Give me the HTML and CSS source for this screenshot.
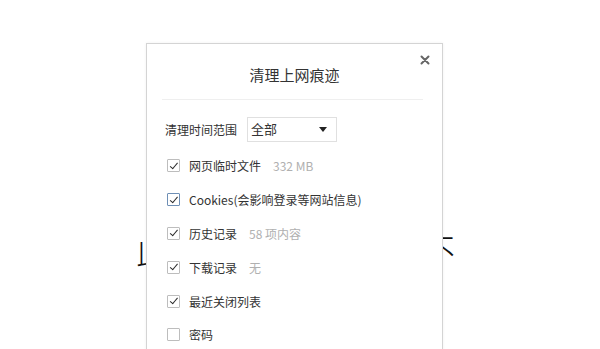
FILE: index.html
```html
<!DOCTYPE html>
<html lang="zh-CN">
<head>
<meta charset="utf-8">
<link rel="stylesheet" href="styles.css">
</head>
<body>
<div class="page">
  <div class="bg-line"><span class="bg-char left">此</span><span class="bg-char right">不</span></div>
</div>
<div class="dialog">
  <button class="close" aria-label="关闭">
    <svg width="10" height="10" viewBox="0 0 10 10"><path d="M1.5 1.5 L8.5 8.5 M8.5 1.5 L1.5 8.5" stroke="#666" stroke-width="2" stroke-linecap="round"/></svg>
  </button>
  <div class="title">清理上网痕迹</div>
  <div class="sep"></div>
  <div class="range">
    <span class="range-label">清理时间范围</span>
    <div class="select"><span>全部</span><span class="arrow"></span></div>
  </div>
  <ul class="list">
    <li class="row"><span class="cb on"></span><span class="txt">网页临时文件</span><span class="meta">332 MB</span></li>
    <li class="row"><span class="cb on focus"></span><span class="txt">Cookies(会影响登录等网站信息)</span></li>
    <li class="row"><span class="cb on"></span><span class="txt">历史记录</span><span class="meta">58 项内容</span></li>
    <li class="row"><span class="cb on"></span><span class="txt">下载记录</span><span class="meta">无</span></li>
    <li class="row"><span class="cb on"></span><span class="txt">最近关闭列表</span></li>
    <li class="row"><span class="cb"></span><span class="txt">密码</span></li>
  </ul>
</div>
</body>
</html>
```
FILE: styles.css
```css
html, body {
  margin: 0;
  padding: 0;
  background: #fff;
  width: 600px;
  height: 349px;
  overflow: hidden;
  font-family: "Noto Sans CJK SC", "Noto Sans", sans-serif;
  color: #333;
}
.page {
  padding-top: 233px;
}
.bg-line {
  display: flex;
  justify-content: space-between;
  margin: 0 145px 0 136px;
  font-size: 34px;
  line-height: 34px;
  color: #111;
  font-weight: 300;
}
.dialog {
  position: absolute;
  left: 146px;
  top: 43px;
  width: 295px;
  height: 340px;
  background: #fff;
  border: 1px solid #d4d4d4;
  box-shadow: 0 0 3px rgba(0,0,0,0.06);
}
.close {
  position: absolute;
  top: 9px;
  right: 10px;
  width: 14px;
  height: 14px;
  padding: 0;
  border: 0;
  background: none;
  display: flex;
  align-items: center;
  justify-content: center;
}
.title {
  margin-top: 21px;
  text-align: center;
  font-size: 15px;
  line-height: 20px;
  color: #333;
}
.sep {
  height: 1px;
  background: #efefef;
  margin: 14px 19px 0 15px;
}
.range {
  display: flex;
  align-items: center;
  margin: 17px 0 0 18px;
  font-size: 12px;
}
.range-label {
  margin-right: 10px;
}
.select {
  border: 1px solid #e0e0e0;
  display: flex;
  align-items: center;
  justify-content: space-between;
  padding: 0 9px 0 3px;
  box-sizing: border-box;
  width: 90px;
  height: 25px;
  font-size: 13px;
}
.select span:first-child {
  margin-top: -3px;
}
.arrow {
  width: 0;
  height: 0;
  border-left: 4px solid transparent;
  border-right: 4px solid transparent;
  border-top: 5px solid #222;
}
.list {
  list-style: none;
  margin: 7px 0 0 20px;
  padding: 0;
}
.row {
  height: 33.8px;
  display: flex;
  align-items: center;
  font-size: 12px;
}
.cb {
  width: 11px;
  height: 11px;
  border: 1px solid #bdbdbd;
  border-radius: 1px;
  margin-right: 9px;
  position: relative;
  background: #fff;
  flex: none;
}
.cb.focus {
  border-color: #6e8fb5;
}
.cb.on::after {
  content: "";
  position: absolute;
  left: 3.5px;
  top: 0.5px;
  width: 3px;
  height: 6.5px;
  border-right: 1.8px solid #2a2a2a;
  border-bottom: 1.8px solid #2a2a2a;
  transform: rotate(40deg);
}
.txt {
  color: #333;
}
.meta {
  margin-left: 12px;
  color: #b0b0b0;
}
```
